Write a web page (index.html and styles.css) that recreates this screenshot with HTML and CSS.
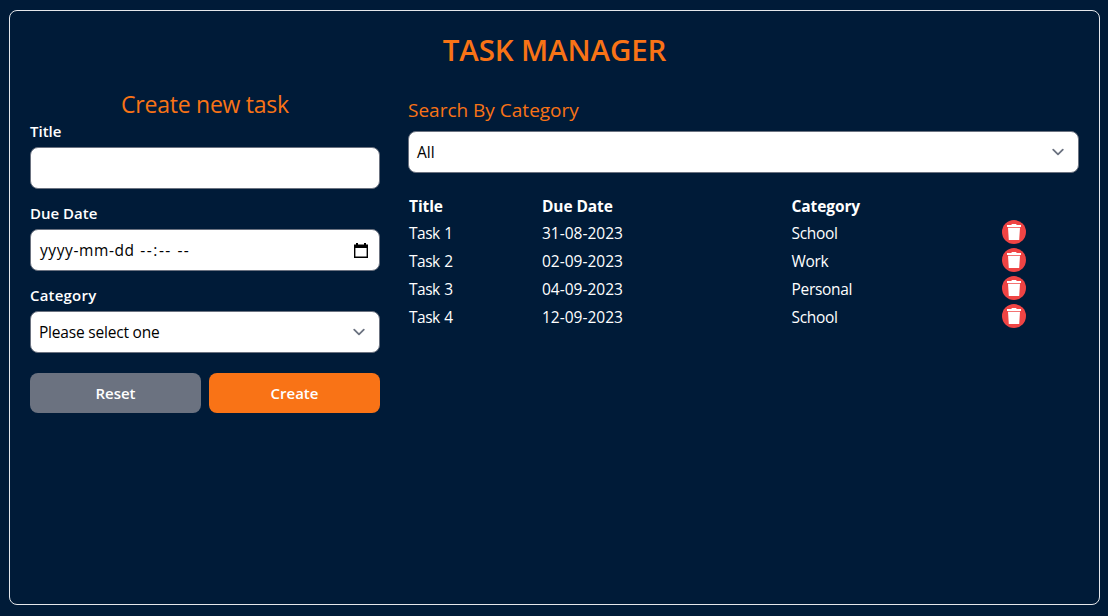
FILE: index.html
```html
<!DOCTYPE html>
<html lang="en">
<head>
<meta charset="utf-8">
<title>Task Manager</title>
<link rel="stylesheet" href="styles.css">
</head>
<body>
<svg class="defs" width="0" height="0">
  <symbol id="trash" viewBox="0 0 14 16"><path d="M0 1h4.6V0h4.8v1H14v2H0zM1 3.8h12l-.8 12.2H1.8z" fill="#fff"/></symbol>
  <symbol id="chevron" viewBox="0 0 20 20"><path d="M6 8l4 4 4-4" fill="none" stroke="#6b7280" stroke-width="1.5" stroke-linecap="round" stroke-linejoin="round"/></symbol>
</svg>
<main class="frame">
  <h1 class="page-title"><span>TASK MANAGER</span></h1>
  <div class="columns">
    <form class="task-form">
      <h2 class="form-title"><span>Create new task</span></h2>
      <div class="field">
        <label class="label">Title</label>
        <div class="control"></div>
      </div>
      <div class="field">
        <label class="label">Due Date</label>
        <div class="control">
          <span class="date-text">yyyy-mm-dd <span class="time-text">--:-- --</span></span>
          <svg class="calendar" width="14" height="15" viewBox="0 0 14 15"><path d="M2 0h2v1.5h6V0h2v1.5h2V15H0V1.5h2zM1.4 5v8.6h11.2V5z" fill="#000" fill-rule="evenodd"/></svg>
        </div>
      </div>
      <div class="field">
        <label class="label label-category">Category</label>
        <div class="control">
          <span class="select-text">Please select one</span>
          <svg class="chevron" width="24" height="24"><use href="#chevron"/></svg>
        </div>
      </div>
      <div class="actions">
        <button type="button" class="button reset">Reset</button>
        <button type="button" class="button create">Create</button>
      </div>
    </form>
    <section class="tasks">
      <h2 class="search-title"><span>Search By Category</span></h2>
      <div class="control">
        <span class="all-text">All</span>
        <svg class="chevron" width="24" height="24"><use href="#chevron"/></svg>
      </div>
      <div class="table">
        <div class="row head"><span>Title</span><span>Due Date</span><span>Category</span></div>
        <div class="row"><span class="name">Task 1</span><span class="date">31-08-2023</span><span class="category">School</span><button type="button" class="delete"><svg width="14" height="16"><use href="#trash"/></svg></button></div>
        <div class="row"><span class="name">Task 2</span><span class="date">02-09-2023</span><span class="category">Work</span><button type="button" class="delete"><svg width="14" height="16"><use href="#trash"/></svg></button></div>
        <div class="row"><span class="name">Task 3</span><span class="date">04-09-2023</span><span class="category">Personal</span><button type="button" class="delete"><svg width="14" height="16"><use href="#trash"/></svg></button></div>
        <div class="row"><span class="name">Task 4</span><span class="date">12-09-2023</span><span class="category">School</span><button type="button" class="delete"><svg width="14" height="16"><use href="#trash"/></svg></button></div>
      </div>
    </section>
  </div>
</main>
</body>
</html>
```
FILE: styles.css
```css
* { box-sizing: border-box; margin: 0; }
body {
  height: 616px;
  padding: 10px 8px 11px 9px;
  background: #001b38;
  color: #fff;
  font: 400 15.5px/24px "Open Sans", "Noto Sans", sans-serif;
  overflow: hidden;
}
.defs { display: block; }
.frame {
  height: 595px;
  border: 1px solid #e5e7eb;
  border-radius: 8px;
  padding: 20px 20px 0;
}
.page-title {
  color: #f97316;
  font-size: 29.5px;
  font-weight: 600;
  line-height: 38px;
  letter-spacing: -0.1px;
  text-align: center;
}
.columns { display: grid; grid-template-columns: 350px 671px; gap: 28px; padding-top: 18px; }
.form-title {
  height: 32px;
  color: #f97316;
  font-size: 23px;
  font-weight: 400;
  line-height: 34px;
  letter-spacing: -0.25px;
  text-align: center;
}
.field { margin-bottom: 12px; }
.label { display: block; font-weight: 600; font-size: 15px; margin-bottom: 4px; }
.label-category { letter-spacing: 0.2px; }
.control {
  display: flex;
  align-items: center;
  justify-content: space-between;
  height: 42px;
  padding: 0 8px;
  border: 1px solid #6b7280;
  border-radius: 8px;
  background: #fff;
  color: #000;
}
.date-text { padding-left: 1px; letter-spacing: 0.6px; }
.time-text { padding-left: 1px; letter-spacing: 1.5px; }
.select-text { letter-spacing: -0.2px; }
.calendar { margin-right: 3px; }
.actions { display: grid; grid-template-columns: 1fr 1fr; gap: 8px; padding-top: 8px; }
.button {
  height: 40px;
  border: 0;
  border-radius: 8px;
  color: #fff;
  font: 600 15px/24px "Open Sans", "Noto Sans", sans-serif;
}
.reset { background: #6b7280; }
.create { background: #f97316; }
.tasks { padding-top: 9px; }
.search-title {
  color: #f97316;
  font-size: 19px;
  font-weight: 400;
  line-height: 28px;
  margin-bottom: 7px;
}
.table { padding: 22px 0 0 1px; }
.row { display: grid; grid-template-columns: 133px 249.5px 210.5px 24px; height: 28px; line-height: 26px; }
.head { height: 25px; line-height: 22px; font-weight: 700; letter-spacing: -0.1px; }
.name { letter-spacing: -0.5px; word-spacing: 1px; }
.category { letter-spacing: -0.3px; }
.delete {
  display: flex;
  align-items: center;
  justify-content: center;
  width: 24px;
  height: 24px;
  padding: 0;
  border: 0;
  border-radius: 50%;
  background: #ef4444;
}
```
